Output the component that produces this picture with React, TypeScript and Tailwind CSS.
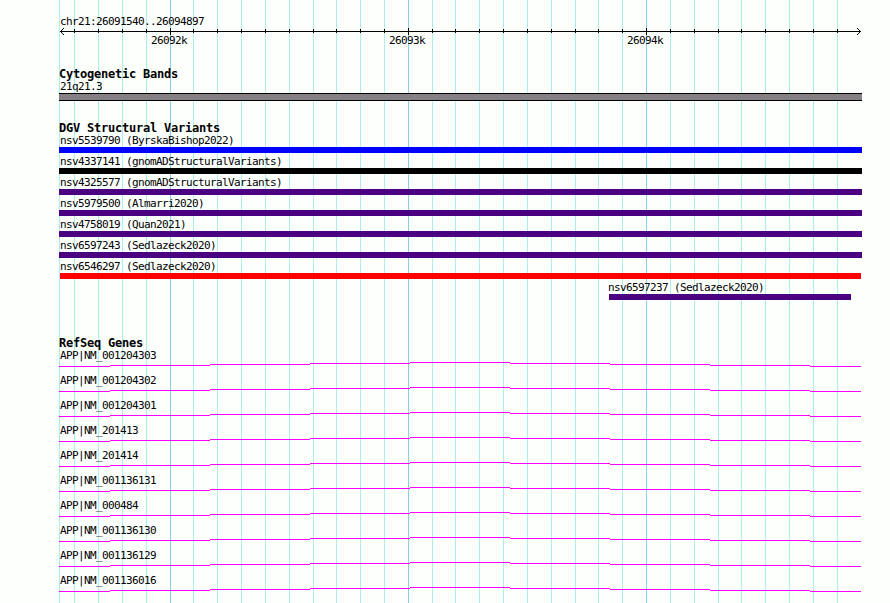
const minorLines = [
  59, 74, 98, 122, 146, 193, 217, 241, 265, 289, 313, 336, 360, 384, 432, 455,
  479, 503, 527, 551, 575, 598, 622, 670, 694, 718, 741, 765, 789, 813, 837,
];

const majorLines = [170, 408, 646];

const variants = [
  { name: "nsv5539790 (ByrskaBishop2022)", bar: "ml-[59px] w-[803px] bg-[#0000ff]" },
  { name: "nsv4337141 (gnomADStructuralVariants)", bar: "ml-[59px] w-[803px] bg-black" },
  { name: "nsv4325577 (gnomADStructuralVariants)", bar: "ml-[59px] w-[803px] bg-[#4b0082]" },
  { name: "nsv5979500 (Almarri2020)", bar: "ml-[59px] w-[803px] bg-[#4b0082]" },
  { name: "nsv4758019 (Quan2021)", bar: "ml-[59px] w-[803px] bg-[#4b0082]" },
  { name: "nsv6597243 (Sedlazeck2020)", bar: "ml-[59px] w-[803px] bg-[#4b0082]" },
  { name: "nsv6546297 (Sedlazeck2020)", bar: "ml-[60px] w-[801px] bg-[#ff0000]" },
  { name: "nsv6597237 (Sedlazeck2020)", bar: "ml-[609px] w-[242px] bg-[#4b0082]", label: "pl-[608px]" },
];

const genes = [
  "APP|NM_001204303",
  "APP|NM_001204302",
  "APP|NM_001204301",
  "APP|NM_201413",
  "APP|NM_201414",
  "APP|NM_001136131",
  "APP|NM_000484",
  "APP|NM_001136130",
  "APP|NM_001136129",
  "APP|NM_001136016",
];

// x, y, width of each intron segment
const intron = [
  [59, 4, 51],
  [110, 3, 100],
  [210, 2, 100],
  [310, 1, 100],
  [410, 0, 100],
  [510, 1, 100],
  [610, 2, 100],
  [710, 3, 100],
  [810, 4, 51],
];

function Grid() {
  return (
    <svg className="absolute inset-0" width="890" height="603" shapeRendering="crispEdges">
      {minorLines.map((x) => (
        <rect key={x} x={x} y={0} width={1} height={603} fill="#afeeee" />
      ))}
      {majorLines.map((x) => (
        <rect key={x} x={x} y={0} width={1} height={603} fill="#87ceeb" />
      ))}
    </svg>
  );
}

function Ruler() {
  return (
    <svg className="block" width="890" height="7" shapeRendering="crispEdges">
      <rect x={60} y={3} width={801} height={1} />
      {minorLines.slice(1).map((x) => (
        <rect key={x} x={x} y={1} width={1} height={4} />
      ))}
      {majorLines.map((x) => (
        <rect key={x} x={x} y={0} width={1} height={7} />
      ))}
      {[0, 1, 2, 3].map((i) => (
        <g key={i}>
          <rect x={60 + i} y={3 - i} width={1} height={1} />
          <rect x={60 + i} y={3 + i} width={1} height={1} />
          <rect x={860 - i} y={3 - i} width={1} height={1} />
          <rect x={860 - i} y={3 + i} width={1} height={1} />
        </g>
      ))}
    </svg>
  );
}

function Title({ children }: { children: string }) {
  return (
    <h2 className="h-3 pl-[59px] text-[12px] leading-3 font-bold tracking-[-0.225px]">
      {children}
    </h2>
  );
}

export default function App() {
  return (
    <main className="relative h-[603px] w-[890px] overflow-hidden bg-[#fdfffc] font-['DejaVu_Sans_Mono',monospace] text-[11px] leading-3 tracking-[-0.622px] whitespace-pre text-black">
      <Grid />

      <div className="relative">
        {/* Ruler */}
        <section className="h-[68px] pt-[15px]">
          <p className="h-[13px] pt-px pl-[60px]">chr21:26091540..26094897</p>
          <Ruler />
          <div className="flex gap-[202px] pl-[151px]">
            <span className="w-9">26092k</span>
            <span className="w-9">26093k</span>
            <span className="w-9">26094k</span>
          </div>
        </section>

        {/* Cytogenetic bands */}
        <section className="h-[54px]">
          <Title>Cytogenetic Bands</Title>
          <p className="h-[13px] pt-px pl-[60px]">21q21.3</p>
          <div className="ml-[59px] h-2 w-[803px] border-y border-black bg-[#848084]" />
        </section>

        {/* Structural variants */}
        <section className="h-[215px]">
          <Title>DGV Structural Variants</Title>
          {variants.map((v) => (
            <div key={v.name} className="h-[21px]">
              <p className={`h-[13px] pt-px ${v.label ?? "pl-[60px]"}`}>{v.name}</p>
              <div className={`h-1.5 ${v.bar}`} />
            </div>
          ))}
        </section>

        {/* Genes */}
        <section>
          <Title>RefSeq Genes</Title>
          {genes.map((gene) => (
            <div key={gene} className="h-[25px]">
              <p className="h-[13px] pt-px pl-[60px]">{gene}</p>
              <svg className="block" width="890" height="5" shapeRendering="crispEdges">
                {intron.map(([x, y, w]) => (
                  <rect key={x} x={x} y={y} width={w} height={1} fill="#ff00ff" />
                ))}
              </svg>
            </div>
          ))}
        </section>
      </div>
    </main>
  );
}
